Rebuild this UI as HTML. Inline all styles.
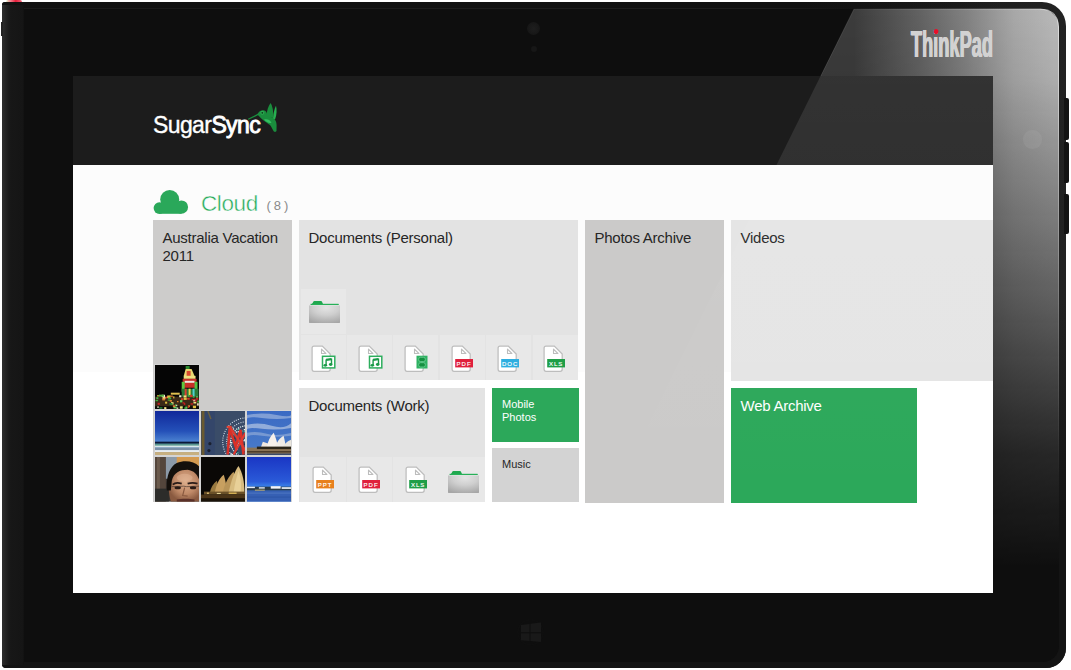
<!DOCTYPE html>
<html><head><meta charset="utf-8">
<style>
*{margin:0;padding:0;box-sizing:border-box}
html,body{width:1071px;height:670px;overflow:hidden;background:#fff}
body{position:relative;font-family:"Liberation Sans",sans-serif}
.a{position:absolute}
.tile{position:absolute;overflow:hidden}
.tt{position:absolute;left:9.5px;top:9.2px;font-size:15px;line-height:17.8px;color:#262626;letter-spacing:-0.25px;white-space:nowrap}
.cell{position:absolute;background:#e8e8e8}
.ph{position:absolute;width:45px;height:45px;overflow:hidden}
</style></head><body>

<div class="a" style="left:2px;top:2px;width:1064px;height:666px;background:linear-gradient(90deg,#161616 0,#1a1a1a 70%,#1e1e1e 90%,#222 100%);border-radius:3px 24px 20px 4px"></div>
<div class="a" style="left:2px;top:2px;width:1000px;height:7px;background:linear-gradient(90deg,#111 0,#111 80%,rgba(17,17,17,0) 100%);border-radius:3px 0 0 0"></div>
<div class="a" style="left:24px;top:7.5px;width:830px;height:1px;background:linear-gradient(90deg,#1a1a1a 0,#1e1e1e 90%,rgba(30,30,30,0) 100%)"></div>
<div class="a" style="left:2px;top:300px;width:1064px;height:368px;background:linear-gradient(180deg,rgba(20,20,20,0) 0,#141414 60%);border-radius:0 0 20px 4px"></div>
<div class="a" style="left:2px;top:5px;width:22px;height:660px;background:linear-gradient(90deg,#2e2e2e 0,#222 4px,#1a1a1a 7px,#171717 9px,#151515 21px,#101010 22px)"></div>
<div class="a" style="left:6px;top:0;width:16px;height:2px;background:linear-gradient(90deg,rgba(200,230,160,0.6) 0,rgba(240,90,110,0.8) 30%,#e8203c 60%,rgba(232,32,60,0.7) 100%);border-radius:3px 3px 0 0"></div>
<div class="a" style="left:1px;top:22px;width:1.5px;height:14px;background:#222"></div>
<div class="a" style="left:1064px;top:98px;width:5px;height:42px;background:#131313;border-radius:0 2px 2px 0"></div>
<div class="a" style="left:1064px;top:142px;width:5px;height:41px;background:#131313;border-radius:0 2px 2px 0"></div>
<div class="a" style="left:1064px;top:194px;width:5px;height:40px;background:#131313;border-radius:0 2px 2px 0"></div>
<div class="a" style="left:24px;top:8.5px;width:1035px;height:653px;background:#0e0e0e;border-radius:1px 18px 16px 1px;overflow:hidden">
<svg class="a" style="left:0;top:0" width="1035" height="655"><defs><linearGradient id="gh" gradientUnits="userSpaceOnUse" x1="829.9925000000001" y1="0" x2="1030" y2="0"><stop offset="0" stop-color="#3c3c3c"/><stop offset="0.33" stop-color="#626262"/><stop offset="0.54" stop-color="#7e7e7e"/><stop offset="0.8" stop-color="#a8a8a8"/><stop offset="1" stop-color="#b8b8b8"/></linearGradient><linearGradient id="gv" gradientUnits="userSpaceOnUse" x1="0" y1="0" x2="0" y2="655"><stop offset="0" stop-color="#fff"/><stop offset="0.1" stop-color="#f0f0f0"/><stop offset="0.22" stop-color="#c4c4c4"/><stop offset="0.45" stop-color="#787878"/><stop offset="0.68" stop-color="#262626"/><stop offset="0.86" stop-color="#000"/></linearGradient><mask id="gm"><rect x="0" y="0" width="1035" height="655" fill="url(#gv)"/></mask></defs><polygon points="834.2,-8.5 1100,-8.5 1100,700 487.70000000000005,691.5" fill="url(#gh)" mask="url(#gm)"/><line x1="829.9925000000001" y1="0" x2="796.58" y2="67.5" stroke="#fff" stroke-opacity="0.12" stroke-width="1"/></svg>
</div>
<div class="a" style="left:527px;top:22px;width:13px;height:13px;border-radius:50%;background:radial-gradient(circle at 50% 50%,#1e1e1e 0,#191919 50%,#121212 100%)"></div>
<div class="a" style="left:531px;top:46px;width:6px;height:6px;border-radius:50%;background:#171717"></div>
<div class="a" style="left:1023px;top:130px;width:19px;height:19px;border-radius:50%;background:radial-gradient(circle,rgba(255,255,255,0.05) 0,rgba(255,255,255,0.06) 70%,rgba(255,255,255,0.09) 85%,rgba(255,255,255,0) 100%)"></div>
<svg class="a" style="left:0;top:0" width="1071" height="670"><defs><linearGradient id="eh" gradientUnits="userSpaceOnUse" x1="1058" y1="0" x2="1058" y2="480"><stop offset="0" stop-color="#fff" stop-opacity="0.55"/><stop offset="0.4" stop-color="#fff" stop-opacity="0.3"/><stop offset="1" stop-color="#fff" stop-opacity="0"/></linearGradient><linearGradient id="eh2" gradientUnits="userSpaceOnUse" x1="854" y1="0" x2="1040" y2="0"><stop offset="0" stop-color="#fff" stop-opacity="0.05"/><stop offset="1" stop-color="#fff" stop-opacity="0.45"/></linearGradient></defs><path d="M854,9 H1040" stroke="url(#eh2)" stroke-width="1" fill="none"/><path d="M1040,9 Q1058.5,9 1058.5,27 V480" stroke="url(#eh)" stroke-width="1" fill="none"/></svg>
<svg class="a" style="left:900px;top:20px" width="100" height="44" viewBox="0 0 100 44"><text x="10.5" y="36.6" font-family="Liberation Sans" font-weight="bold" font-size="36.5" fill="#d2d2d2" transform="translate(10.5,0) scale(0.5,1) translate(-10.5,0)" letter-spacing="0">ThinkPad</text><text x="11.3" y="36.6" font-family="Liberation Sans" font-weight="bold" font-size="36.5" fill="#d2d2d2" transform="translate(10.5,0) scale(0.5,1) translate(-10.5,0)" letter-spacing="0">ThinkPad</text><text x="12.1" y="36.6" font-family="Liberation Sans" font-weight="bold" font-size="36.5" fill="#d2d2d2" transform="translate(10.5,0) scale(0.5,1) translate(-10.5,0)" letter-spacing="0">ThinkPad</text><ellipse cx="36.1" cy="11.6" rx="2.3" ry="2.6" fill="#e8102a"/></svg>
<svg class="a" style="left:510px;top:611px" width="41" height="41" viewBox="0 0 41 41"><circle cx="31" cy="21" r="0" fill="none"/><circle cx="31" cy="32" r="0"/><circle cx="31" cy="21" r="0"/><circle cx="30.8" cy="21.3" r="12.5" fill="none" stroke="#101010" stroke-width="1.2" transform="translate(-10.3,0)"/><g fill="#191919"><path d="M11,14 L19.5,13 V21.2 H11 Z"/><path d="M20.5,12.8 L31,11.6 V21.2 H20.5 Z"/><path d="M11,22.2 H19.5 V30 L11,29.2 Z"/><path d="M20.5,22.2 H31 V31 L20.5,30.1 Z"/></g></svg>
<div class="a" style="left:73px;top:76px;width:920px;height:517px;background:#fcfcfc;overflow:hidden">
<div class="a" style="left:0;top:296px;width:920px;height:221px;background:#fff"></div>
<div class="a" style="left:0;top:0;width:920px;height:89px;background:#1c1c1c"></div>
<div class="a" style="left:80px;top:35px;font-size:23px;line-height:28px;color:#fff;letter-spacing:-0.6px;-webkit-text-stroke:0.35px #fff">Sugar<span style="-webkit-text-stroke:0.9px #fff">Sync</span></div>
<svg class="a" style="left:167px;top:22px" width="45" height="40" viewBox="0 0 45 40"><path d="M8.7,21 L18.5,16.2" stroke="#1a8d3d" stroke-width="1.3" stroke-linecap="round"/><path d="M17.3,16.5 C18.5,13.5 21,12 23.5,12.2 C26,12.5 27,14.5 27.2,17 L33.4,20.3 C35.5,21.5 36.5,24 36.6,27 L36.5,33 C36,33.8 35,34 34,33.7 C32.5,31.5 31.5,29 30,27 C28,25.5 25.5,24 23.9,22.7 C21.5,21 19.5,18.5 17.3,16.5 Z" fill="#1a8d3d"/><path d="M26.5,18.5 C26.8,12 28.5,7.5 30.7,5 C32.5,8 33.5,13 33.3,20 Z" fill="#1a8d3d"/><path d="M33,20.5 C33.5,15 34.5,10.5 36,7.8 C37,11.5 36.8,17 35,21.5 Z" fill="#26b050"/><path d="M24,21.5 C26.5,20.5 30,21.5 31.5,24.5 C30,26 26.5,24.5 24,21.5 Z" fill="#34c060"/><circle cx="22.3" cy="14.8" r="2" fill="#2aa850"/><circle cx="22.3" cy="14.8" r="0.9" fill="#0d3d1a"/></svg>
<svg class="a" style="left:80px;top:113px" width="36" height="26" viewBox="0 0 36 26"><g fill="#2aa85a"><circle cx="16.7" cy="10.5" r="9.5"/><circle cx="28.4" cy="18.1" r="6.7"/><circle cx="6.4" cy="19.1" r="5.8"/><rect x="6.4" y="14" width="22" height="10.8"/></g></svg>
<div class="a" style="left:128px;top:113.5px;font-size:22.5px;line-height:28px;color:#28ad5c;letter-spacing:-0.4px;-webkit-text-stroke:0.45px #fcfcfc">Cloud</div>
<div class="a" style="left:193.5px;top:122px;font-size:13px;line-height:16px;color:#8a8a8a;letter-spacing:-0.3px">( 8 )</div>
<div class="tile" style="left:80px;top:144px;width:139px;height:282px;background:#cdcccb">
<div class="tt">Australia Vacation<br>2011</div>
<div class="a" style="left:0.5px;top:143.5px;width:139px;height:139px;background:#d4d4d4"></div>
<div class="a" style="left:46px;top:143.5px;width:93px;height:46px;background:#cdcccb"></div>
<svg class="a" style="left:1.5px;top:144.5px" width="44.5" height="44.5" viewBox="0 0 45 45" preserveAspectRatio="none"><rect width="45" height="45" fill="#050505"/><rect x="31" y="1" width="4" height="3" fill="#2a8a30"/><polygon points="29,11 31,4 37,4 40,11" fill="#e8d870"/><rect x="32" y="6" width="4" height="5" fill="#d84a30"/><rect x="29" y="11" width="12" height="3" fill="#f0e080"/><rect x="28" y="14" width="14" height="9" fill="#c83028"/><rect x="30" y="16" width="10" height="2" fill="#f0e8e0"/><rect x="27" y="17" width="3" height="10" fill="#60c840"/><rect x="40" y="17" width="3" height="10" fill="#50c040"/><rect x="27" y="24" width="17" height="10" fill="#2a7a38"/><rect x="30" y="24" width="2" height="10" fill="#d84030"/><rect x="34" y="24" width="2" height="10" fill="#e8d850"/><rect x="38" y="24" width="2" height="10" fill="#50d0d0"/><rect x="0" y="32" width="45" height="10" fill="#3a2a18"/><rect x="0" y="42" width="45" height="3" fill="#0a0a0a"/><rect x="10.2" y="37.1" width="2.1" height="2.0" fill="#e0c040"/><rect x="26.0" y="41.8" width="2.3" height="1.9" fill="#208038"/><rect x="42.8" y="36.1" width="3.1" height="1.8" fill="#40b040"/><rect x="10.0" y="32.0" width="3.3" height="1.7" fill="#d03a28"/><rect x="28.9" y="30.8" width="2.9" height="2.0" fill="#f0e080"/><rect x="33.5" y="40.7" width="1.8" height="2.0" fill="#e08030"/><rect x="30.7" y="42.0" width="2.1" height="2.2" fill="#60d060"/><rect x="41.5" y="31.7" width="2.0" height="1.2" fill="#60d060"/><rect x="9.3" y="42.6" width="2.2" height="2.0" fill="#f0e080"/><rect x="18.1" y="40.8" width="2.5" height="1.9" fill="#e08030"/><rect x="25.1" y="41.8" width="2.8" height="2.4" fill="#f0e080"/><rect x="42.6" y="38.7" width="1.6" height="2.3" fill="#f0f0d0"/><rect x="38.9" y="37.4" width="2.8" height="1.5" fill="#f0e080"/><rect x="12.3" y="30.8" width="3.2" height="2.5" fill="#e0c040"/><rect x="14.8" y="30.9" width="3.3" height="1.2" fill="#e08030"/><rect x="33.1" y="41.3" width="1.3" height="2.0" fill="#d03a28"/><rect x="16.2" y="37.6" width="2.5" height="2.4" fill="#f0e080"/><rect x="21.7" y="43.0" width="1.9" height="1.3" fill="#f0f0d0"/><rect x="1.3" y="32.6" width="2.1" height="2.0" fill="#40b040"/><rect x="29.7" y="42.7" width="2.0" height="1.7" fill="#40b040"/><rect x="38.6" y="34.9" width="2.3" height="1.9" fill="#f0f0d0"/><rect x="4.4" y="42.6" width="3.1" height="1.6" fill="#208038"/><rect x="40.3" y="35.7" width="1.8" height="1.6" fill="#c02020"/><rect x="0.5" y="35.4" width="2.5" height="1.2" fill="#40b040"/><rect x="2.6" y="38.2" width="2.3" height="2.1" fill="#c02020"/><rect x="26.2" y="33.6" width="2.3" height="2.0" fill="#d03a28"/><rect x="41.4" y="33.3" width="2.2" height="2.0" fill="#c02020"/><rect x="7.6" y="32.4" width="2.9" height="2.3" fill="#f0e080"/><rect x="12.9" y="34.9" width="3.0" height="1.2" fill="#40b040"/><rect x="13.3" y="32.9" width="3.0" height="1.5" fill="#40b040"/><rect x="29.2" y="38.4" width="1.4" height="2.0" fill="#c02020"/><rect x="29.0" y="32.9" width="3.1" height="2.4" fill="#e0c040"/><rect x="14.5" y="38.5" width="3.2" height="1.8" fill="#208038"/><rect x="33.8" y="30.4" width="3.4" height="1.6" fill="#40b040"/><rect x="37.1" y="34.4" width="3.1" height="1.3" fill="#c02020"/><rect x="25.3" y="35.5" width="2.4" height="2.3" fill="#60d060"/><rect x="14.9" y="35.4" width="2.2" height="1.7" fill="#e08030"/><rect x="6.7" y="30.1" width="3.4" height="2.3" fill="#f0f0d0"/><rect x="18.7" y="42.4" width="3.3" height="1.5" fill="#60d060"/><rect x="36.0" y="38.6" width="2.4" height="1.6" fill="#c02020"/><rect x="38.3" y="41.2" width="3.2" height="2.5" fill="#e0c040"/><rect x="34.8" y="30.6" width="3.3" height="2.1" fill="#208038"/><rect x="38.6" y="41.7" width="2.5" height="1.2" fill="#e0c040"/><rect x="7.4" y="33.9" width="2.7" height="1.9" fill="#e08030"/><rect x="2.3" y="41.9" width="1.5" height="1.4" fill="#f0f0d0"/><rect x="20.5" y="40.2" width="2.0" height="1.5" fill="#f0f0d0"/><rect x="38.2" y="31.5" width="1.8" height="1.6" fill="#40b040"/><rect x="35.4" y="30.1" width="2.6" height="2.3" fill="#d03a28"/><rect x="32.5" y="33.2" width="2.6" height="1.9" fill="#d03a28"/><rect x="20.3" y="40.1" width="1.2" height="1.3" fill="#40b040"/><rect x="2.0" y="30.6" width="2.3" height="1.2" fill="#e0c040"/><rect x="22.2" y="36.4" width="1.6" height="1.3" fill="#e08030"/><rect x="27.8" y="37.6" width="2.0" height="1.4" fill="#c02020"/><rect x="18.4" y="31.7" width="1.2" height="2.1" fill="#e0c040"/><rect x="24.4" y="30.6" width="2.3" height="2.0" fill="#f0f0d0"/><rect x="16" y="28" width="9" height="2" fill="#e0c050"/><rect x="4" y="30" width="5" height="2" fill="#50b040"/></svg>
<svg class="a" style="left:1.5px;top:190.8px" width="44.5" height="44.5" viewBox="0 0 45 45" preserveAspectRatio="none"><defs><linearGradient id="p2" x1="0" y1="0" x2="0" y2="1"><stop offset="0" stop-color="#10289a"/><stop offset="0.45" stop-color="#2450b8"/><stop offset="0.68" stop-color="#4a80d0"/></linearGradient></defs><rect width="45" height="45" fill="url(#p2)"/><rect y="31" width="45" height="2.2" fill="#0a1838"/><rect y="33" width="45" height="3" fill="#5a9890"/><rect y="35" width="45" height="2" fill="#d8e8e8"/><rect y="37" width="45" height="2.5" fill="#7a90a8"/><rect y="39.5" width="45" height="2" fill="#e8ecf0"/><rect y="41.5" width="45" height="3.5" fill="#c8b080"/></svg>
<svg class="a" style="left:47.5px;top:190.8px" width="44.5" height="44.5" viewBox="0 0 45 45" preserveAspectRatio="none"><rect width="45" height="45" fill="#34466a"/><rect x="14" width="31" height="45" fill="#3a4c68"/><rect x="0.5" y="0" width="3" height="45" fill="#6a5a30"/><path d="M7,0 L10,8" stroke="#6a6040" stroke-width="1.5"/><circle cx="46" cy="31" r="24" fill="none" stroke="#d8e4ec" stroke-width="1.1" stroke-dasharray="1 1.3"/><circle cx="46" cy="31" r="20" fill="none" stroke="#d8e4ec" stroke-width="1.1" stroke-dasharray="1 1.3"/><circle cx="46" cy="31" r="16" fill="none" stroke="#e8f0f0" stroke-width="1.2" stroke-dasharray="1.2 1"/><rect x="31.8" y="20.2" width="1.4" height="1.4" fill="#e8f0e8"/><rect x="27.3" y="31.0" width="1.4" height="1.4" fill="#f0f0f0"/><rect x="36.5" y="41.5" width="1.4" height="1.4" fill="#40b0a0"/><rect x="26.7" y="28.1" width="1.4" height="1.4" fill="#e8f0e8"/><rect x="30.3" y="31.4" width="1.4" height="1.4" fill="#e8f0e8"/><rect x="40.9" y="19.5" width="1.4" height="1.4" fill="#40b0a0"/><rect x="37.4" y="32.3" width="1.4" height="1.4" fill="#e8f0e8"/><rect x="36.4" y="27.1" width="1.4" height="1.4" fill="#40b0a0"/><rect x="26.8" y="40.0" width="1.4" height="1.4" fill="#f0f0f0"/><rect x="33.5" y="31.1" width="1.4" height="1.4" fill="#f0f0f0"/><rect x="36.1" y="35.1" width="1.4" height="1.4" fill="#e8f0e8"/><rect x="36.5" y="33.9" width="1.4" height="1.4" fill="#f0f0f0"/><rect x="27.8" y="35.9" width="1.4" height="1.4" fill="#e8f0e8"/><rect x="37.1" y="29.9" width="1.4" height="1.4" fill="#203040"/><rect x="40.0" y="29.0" width="1.4" height="1.4" fill="#203040"/><rect x="32.5" y="23.0" width="1.4" height="1.4" fill="#40b0a0"/><rect x="38.6" y="22.8" width="1.4" height="1.4" fill="#f0f0f0"/><rect x="35.5" y="40.5" width="1.4" height="1.4" fill="#203040"/><rect x="31.2" y="43.4" width="1.4" height="1.4" fill="#e8f0e8"/><rect x="35.2" y="20.6" width="1.4" height="1.4" fill="#f0f0f0"/><rect x="28.7" y="29.7" width="1.4" height="1.4" fill="#e8f0e8"/><rect x="43.3" y="18.2" width="1.4" height="1.4" fill="#f0f0f0"/><rect x="32.1" y="25.8" width="1.4" height="1.4" fill="#203040"/><rect x="36.4" y="28.8" width="1.4" height="1.4" fill="#e8f0e8"/><rect x="43.0" y="29.3" width="1.4" height="1.4" fill="#e8f0e8"/><rect x="27.1" y="35.6" width="1.4" height="1.4" fill="#203040"/><rect x="31.1" y="26.8" width="1.4" height="1.4" fill="#f0f0f0"/><rect x="26.4" y="28.9" width="1.4" height="1.4" fill="#40b0a0"/><rect x="37.0" y="29.8" width="1.4" height="1.4" fill="#40b0a0"/><rect x="39.8" y="19.6" width="1.4" height="1.4" fill="#40b0a0"/><rect x="33.2" y="41.7" width="1.4" height="1.4" fill="#203040"/><rect x="27.5" y="28.6" width="1.4" height="1.4" fill="#f0f0f0"/><rect x="41.9" y="38.9" width="1.4" height="1.4" fill="#f0f0f0"/><rect x="38.7" y="43.6" width="1.4" height="1.4" fill="#203040"/><rect x="43.2" y="20.2" width="1.4" height="1.4" fill="#40b0a0"/><rect x="28.7" y="34.4" width="1.4" height="1.4" fill="#e8f0e8"/><rect x="34.7" y="32.5" width="1.4" height="1.4" fill="#f0f0f0"/><rect x="31.1" y="20.1" width="1.4" height="1.4" fill="#f0f0f0"/><rect x="37.0" y="24.9" width="1.4" height="1.4" fill="#40b0a0"/><rect x="38.4" y="30.4" width="1.4" height="1.4" fill="#e8f0e8"/><rect x="34.2" y="40.4" width="1.4" height="1.4" fill="#203040"/><rect x="33.2" y="27.0" width="1.4" height="1.4" fill="#203040"/><rect x="37.4" y="17.7" width="1.4" height="1.4" fill="#e8f0e8"/><rect x="43.7" y="28.3" width="1.4" height="1.4" fill="#e8f0e8"/><rect x="32.1" y="17.5" width="1.4" height="1.4" fill="#e8f0e8"/><rect x="36.2" y="31.0" width="1.4" height="1.4" fill="#f0f0f0"/><rect x="37.0" y="18.0" width="1.4" height="1.4" fill="#40b0a0"/><rect x="37.1" y="20.2" width="1.4" height="1.4" fill="#f0f0f0"/><rect x="43.2" y="32.9" width="1.4" height="1.4" fill="#203040"/><rect x="28.2" y="39.8" width="1.4" height="1.4" fill="#203040"/><rect x="34.6" y="24.7" width="1.4" height="1.4" fill="#40b0a0"/><rect x="27.8" y="25.6" width="1.4" height="1.4" fill="#f0f0f0"/><rect x="34.6" y="35.4" width="1.4" height="1.4" fill="#e8f0e8"/><rect x="29.7" y="42.7" width="1.4" height="1.4" fill="#f0f0f0"/><rect x="28.6" y="31.2" width="1.4" height="1.4" fill="#e8f0e8"/><rect x="39.6" y="24.3" width="1.4" height="1.4" fill="#e8f0e8"/><rect x="38.5" y="23.3" width="1.4" height="1.4" fill="#f0f0f0"/><rect x="42.3" y="26.0" width="1.4" height="1.4" fill="#40b0a0"/><rect x="35.6" y="37.8" width="1.4" height="1.4" fill="#f0f0f0"/><rect x="37.5" y="33.2" width="1.4" height="1.4" fill="#40b0a0"/><path d="M27,44 L29,17 L35,36 L40,19 L43,44" fill="none" stroke="#d83028" stroke-width="2.6"/><path d="M30,17 L45,40 M45,22 L33,44" fill="none" stroke="#e03a30" stroke-width="2.2"/><rect x="26" y="15" width="5" height="2" fill="#e84030"/><circle cx="9" cy="33" r="1.6" fill="#1a2030"/><circle cx="8" cy="40" r="1.6" fill="#1a2030"/></svg>
<svg class="a" style="left:93.8px;top:190.8px" width="44.5" height="44.5" viewBox="0 0 45 45" preserveAspectRatio="none"><defs><linearGradient id="p4" x1="0" y1="0" x2="0" y2="1"><stop offset="0" stop-color="#3a6ac4"/><stop offset="1" stop-color="#4a7cc8"/></linearGradient></defs><rect width="45" height="45" fill="url(#p4)"/><path d="M0,4 Q15,1 30,4 T45,3 V7 Q30,9 15,7 T0,8 Z" fill="#b8c8e4" opacity="0.55"/><path d="M0,14 Q12,11 25,15 T45,12 V17 Q30,20 15,18 T0,19 Z" fill="#c8d4e8" opacity="0.6"/><path d="M0,22 Q10,20 20,23 T45,22 V25 Q30,27 15,25 T0,27 Z" fill="#b8c8e0" opacity="0.45"/><path d="M14,37 L16,31 L22,33 L24,37 Z" fill="#f0e8e0"/><path d="M20,37 C21,31 23,26 27,22 C29,27 31,32 31,37 Z" fill="#f6f0ea"/><path d="M28,37 C30,32 33,27 37,25 C38,29 39,33 39,37 Z" fill="#f0ece6"/><path d="M36,37 C38,33 41,30 45,29 V37 Z" fill="#eae6de"/><rect x="0" y="37" width="45" height="8" fill="#8a7456"/><rect x="10" y="36" width="35" height="2.5" fill="#2a2418"/><rect x="0" y="40.5" width="45" height="1.5" fill="#4a3a28"/><rect x="0" y="43" width="45" height="2" fill="#3a4a68"/></svg>
<svg class="a" style="left:1.5px;top:237px" width="44.5" height="44.5" viewBox="0 0 45 45" preserveAspectRatio="none"><defs><radialGradient id="p5" cx="0.55" cy="0.4" r="0.6"><stop offset="0" stop-color="#dcae8c"/><stop offset="0.6" stop-color="#c08a68"/><stop offset="1" stop-color="#8a5a40"/></radialGradient></defs><rect width="45" height="45" fill="#3a3430"/><rect x="0" width="11" height="45" fill="#54463c"/><rect x="2" width="3" height="45" fill="#6a5a4c"/><rect x="11" y="0" width="12" height="22" fill="#8c9aa8"/><rect x="22" y="0" width="23" height="10" fill="#d49a50"/><rect x="0" y="32" width="14" height="13" fill="#2c2c2a"/><path d="M16,45 C14,38 13,30 15,22 C17,15 24,12 31,12 C38,12 44,16 45,22 L45,45 Z" fill="url(#p5)"/><path d="M12,34 C11,22 14,10 22,6 C30,3 40,4 45,10 L45,24 C43,18 40,14 33,13 C25,13 19,16 17,24 L16,34 Z" fill="#14100c"/><path d="M18,28 C20,26 24,26 27,27 M33,27 C36,26 40,26 43,27" stroke="#2a1c18" stroke-width="1.8" fill="none"/><ellipse cx="23" cy="31" rx="3.2" ry="1.6" fill="#2a1a14"/><ellipse cx="38.5" cy="31" rx="3.2" ry="1.6" fill="#2a1a14"/><path d="M17,30 L29,29.5 L32,30 L45,29.5" stroke="#4a3830" stroke-width="0.7" fill="none"/><path d="M30,31 L28,39 L33,39.5" stroke="#8a5a40" stroke-width="1.2" fill="none"/><path d="M22,43 C27,42 35,42 40,43 L40,45 L22,45 Z" fill="#5a3028"/><ellipse cx="30" cy="21" rx="8" ry="4" fill="#e4b898" opacity="0.45"/></svg>
<svg class="a" style="left:47.5px;top:237px" width="44.5" height="44.5" viewBox="0 0 45 45" preserveAspectRatio="none"><rect width="45" height="45" fill="#0a0806"/><path d="M9,36 C10,31 12,27 16,24 C17,28 18,32 18,36 Z" fill="#9a7a40"/><path d="M14,36 C15,29 18,22 23,18 C25,24 26,30 26,36 Z" fill="#c8a060"/><path d="M22,36 C24,27 28,19 33,15 C35,22 36,29 35,36 Z" fill="#b89458"/><path d="M28,36 C30,25 34,14 38,9 C42,16 44,25 44,36 Z" fill="#d8bc80"/><path d="M33,36 C34,28 36,20 38,14 C40,20 41,28 40,36 Z" fill="#e8d098"/><rect x="3" y="35" width="42" height="3" fill="#6a5028"/><rect x="6" y="36" width="2" height="1.2" fill="#f0d080"/><rect x="16" y="36.3" width="4" height="1" fill="#f0e0a0"/><rect x="28" y="36" width="8" height="1.2" fill="#f0c860"/><rect x="0" y="38" width="45" height="4" fill="#4a3418"/><rect x="0" y="42" width="45" height="3" fill="#1a1208"/></svg>
<svg class="a" style="left:93.8px;top:237px" width="44.5" height="44.5" viewBox="0 0 45 45" preserveAspectRatio="none"><defs><linearGradient id="p7" x1="0" y1="0" x2="0" y2="1"><stop offset="0" stop-color="#1a36c4"/><stop offset="0.55" stop-color="#2a5ad8"/><stop offset="0.66" stop-color="#3a80e8"/></linearGradient></defs><rect width="45" height="45" fill="url(#p7)"/><rect y="30" width="45" height="4" fill="#2a3a48"/><rect x="0" y="30" width="8" height="1.5" fill="#e8eef8"/><rect x="12" y="30.5" width="6" height="1.5" fill="#d8e0e8"/><rect x="24" y="29.5" width="10" height="2.5" fill="#f4f6fa"/><rect x="35" y="30.5" width="10" height="1.8" fill="#e0e8f0"/><rect x="8" y="33" width="10" height="1.5" fill="#c8b060"/><rect y="34" width="45" height="11" fill="#3660b4"/><rect y="36" width="45" height="1" fill="#5a80c8" opacity="0.7"/><rect y="40" width="45" height="1" fill="#2a50a0" opacity="0.7"/></svg>
</div>
<div class="tile" style="left:226px;top:144px;width:279px;height:160px;background:#e3e3e3">
<div class="tt">Documents (Personal)</div>
<div class="cell" style="left:1.5px;top:68.5px;width:45px;height:45.3px"></div>
<div class="cell" style="left:1.5px;top:115.3px;width:45px;height:44.5px"></div>
<div class="cell" style="left:47.9px;top:115.3px;width:45px;height:44.5px"></div>
<div class="cell" style="left:94.3px;top:115.3px;width:45px;height:44.5px"></div>
<div class="cell" style="left:140.7px;top:115.3px;width:45px;height:44.5px"></div>
<div class="cell" style="left:187.1px;top:115.3px;width:45px;height:44.5px"></div>
<div class="cell" style="left:233.5px;top:115.3px;width:45px;height:44.5px"></div>
<svg class="a" style="left:8.5px;top:80px" width="34" height="26" viewBox="0 0 34 26"><defs><radialGradient id="fg1" cx="0.55" cy="0.15" r="0.9"><stop offset="0" stop-color="#e4e4e4"/><stop offset="0.45" stop-color="#cfcfcf"/><stop offset="1" stop-color="#a6a6a6"/></radialGradient></defs><path d="M2.6,5 C3.6,4.6 4.6,3.2 5.4,1.6 Q5.7,1 6.4,1 H13 Q13.6,1 13.9,1.6 L15,4 H29.6 Q30.6,4 30.6,5 Z" fill="#1fa84e"/><rect x="2.6" y="3.8" width="28" height="1.5" fill="#27b058"/><path d="M1,5.2 H32 V22.6 Q32,23 31.5,23 H1.5 Q1,23 1,22.6 Z" fill="url(#fg1)"/><rect x="1.5" y="5.2" width="30" height="0.6" fill="#f0f0f0" opacity="0.7"/></svg>
<svg class="a" style="left:12.3px;top:125.0px" width="27" height="28" viewBox="-0.5 -0.5 27 28"><path d="M2.5,0.6 H10.8 L18.7,8.5 V23.8 Q18.7,25.8 16.7,25.8 H2.5 Q0.6,25.8 0.6,23.8 V2.5 Q0.6,0.6 2.5,0.6 Z" fill="#fff" stroke="#bdbdbd" stroke-width="1.25"/><path d="M10,3.6 L10,8 L14.4,8 Z" fill="#fff" stroke="#bdbdbd" stroke-width="1.1" stroke-linejoin="round"/><rect x="11" y="10.8" width="12.3" height="11.6" fill="#fff" stroke="#2eae5e" stroke-width="1.5"/><path d="M14.6,19.6 V14.6 L20,13.8 V18.8" fill="none" stroke="#1a9a48" stroke-width="1.4"/><path d="M14.6,14.3 L20,13.5" stroke="#1a9a48" stroke-width="2"/><ellipse cx="13.8" cy="19.8" rx="1.8" ry="1.4" fill="#1a9a48"/><ellipse cx="19.2" cy="19" rx="1.8" ry="1.4" fill="#1a9a48"/></svg>
<svg class="a" style="left:58.7px;top:125.0px" width="27" height="28" viewBox="-0.5 -0.5 27 28"><path d="M2.5,0.6 H10.8 L18.7,8.5 V23.8 Q18.7,25.8 16.7,25.8 H2.5 Q0.6,25.8 0.6,23.8 V2.5 Q0.6,0.6 2.5,0.6 Z" fill="#fff" stroke="#bdbdbd" stroke-width="1.25"/><path d="M10,3.6 L10,8 L14.4,8 Z" fill="#fff" stroke="#bdbdbd" stroke-width="1.1" stroke-linejoin="round"/><rect x="11" y="10.8" width="12.3" height="11.6" fill="#fff" stroke="#2eae5e" stroke-width="1.5"/><path d="M14.6,19.6 V14.6 L20,13.8 V18.8" fill="none" stroke="#1a9a48" stroke-width="1.4"/><path d="M14.6,14.3 L20,13.5" stroke="#1a9a48" stroke-width="2"/><ellipse cx="13.8" cy="19.8" rx="1.8" ry="1.4" fill="#1a9a48"/><ellipse cx="19.2" cy="19" rx="1.8" ry="1.4" fill="#1a9a48"/></svg>
<svg class="a" style="left:105.1px;top:125.0px" width="27" height="28" viewBox="-0.5 -0.5 27 28"><path d="M2.5,0.6 H10.8 L18.7,8.5 V23.8 Q18.7,25.8 16.7,25.8 H2.5 Q0.6,25.8 0.6,23.8 V2.5 Q0.6,0.6 2.5,0.6 Z" fill="#fff" stroke="#bdbdbd" stroke-width="1.25"/><path d="M10,3.6 L10,8 L14.4,8 Z" fill="#fff" stroke="#bdbdbd" stroke-width="1.1" stroke-linejoin="round"/><rect x="12" y="10.2" width="11" height="12.8" fill="#2eb262"/><rect x="14.2" y="11.8" width="6.6" height="4.3" rx="1.8" fill="#149040" stroke="#7ad4a0" stroke-width="0.7"/><rect x="14.2" y="17.2" width="6.6" height="4.3" rx="1.8" fill="#149040" stroke="#7ad4a0" stroke-width="0.7"/></svg>
<svg class="a" style="left:151.5px;top:125.0px" width="27" height="28" viewBox="-0.5 -0.5 27 28"><path d="M2.5,0.6 H10.8 L18.7,8.5 V23.8 Q18.7,25.8 16.7,25.8 H2.5 Q0.6,25.8 0.6,23.8 V2.5 Q0.6,0.6 2.5,0.6 Z" fill="#fff" stroke="#bdbdbd" stroke-width="1.25"/><path d="M10,3.6 L10,8 L14.4,8 Z" fill="#fff" stroke="#bdbdbd" stroke-width="1.1" stroke-linejoin="round"/><rect x="3.7" y="13.5" width="17.8" height="8.4" fill="#e0203c"/><text x="12.6" y="20" font-family="Liberation Sans" font-size="6" fill="#fff" text-anchor="middle" letter-spacing="1" stroke="#fff" stroke-width="0.15">PDF</text></svg>
<svg class="a" style="left:197.9px;top:125.0px" width="27" height="28" viewBox="-0.5 -0.5 27 28"><path d="M2.5,0.6 H10.8 L18.7,8.5 V23.8 Q18.7,25.8 16.7,25.8 H2.5 Q0.6,25.8 0.6,23.8 V2.5 Q0.6,0.6 2.5,0.6 Z" fill="#fff" stroke="#bdbdbd" stroke-width="1.25"/><path d="M10,3.6 L10,8 L14.4,8 Z" fill="#fff" stroke="#bdbdbd" stroke-width="1.1" stroke-linejoin="round"/><rect x="3.7" y="13.5" width="17.8" height="8.4" fill="#2eaee0"/><text x="12.6" y="20" font-family="Liberation Sans" font-size="6" fill="#fff" text-anchor="middle" letter-spacing="1" stroke="#fff" stroke-width="0.15">DOC</text></svg>
<svg class="a" style="left:244.3px;top:125.0px" width="27" height="28" viewBox="-0.5 -0.5 27 28"><path d="M2.5,0.6 H10.8 L18.7,8.5 V23.8 Q18.7,25.8 16.7,25.8 H2.5 Q0.6,25.8 0.6,23.8 V2.5 Q0.6,0.6 2.5,0.6 Z" fill="#fff" stroke="#bdbdbd" stroke-width="1.25"/><path d="M10,3.6 L10,8 L14.4,8 Z" fill="#fff" stroke="#bdbdbd" stroke-width="1.1" stroke-linejoin="round"/><rect x="3.7" y="13.5" width="17.8" height="8.4" fill="#1f9e48"/><text x="12.6" y="20" font-family="Liberation Sans" font-size="6" fill="#fff" text-anchor="middle" letter-spacing="1" stroke="#fff" stroke-width="0.15">XLS</text></svg>
</div>
<div class="tile" style="left:226px;top:312px;width:186px;height:114px;background:#e3e3e3">
<div class="tt">Documents (Work)</div>
<div class="cell" style="left:1px;top:69px;width:45.5px;height:45px"></div>
<div class="cell" style="left:47.5px;top:69px;width:45.5px;height:45px"></div>
<div class="cell" style="left:94px;top:69px;width:45.5px;height:45px"></div>
<div class="cell" style="left:140px;top:69px;width:45.5px;height:45px"></div>
<svg class="a" style="left:12.5px;top:77.5px" width="27" height="28" viewBox="-0.5 -0.5 27 28"><path d="M2.5,0.6 H10.8 L18.7,8.5 V23.8 Q18.7,25.8 16.7,25.8 H2.5 Q0.6,25.8 0.6,23.8 V2.5 Q0.6,0.6 2.5,0.6 Z" fill="#fff" stroke="#bdbdbd" stroke-width="1.25"/><path d="M10,3.6 L10,8 L14.4,8 Z" fill="#fff" stroke="#bdbdbd" stroke-width="1.1" stroke-linejoin="round"/><rect x="3.7" y="13.5" width="17.8" height="8.4" fill="#e8801c"/><text x="12.6" y="20" font-family="Liberation Sans" font-size="6" fill="#fff" text-anchor="middle" letter-spacing="1" stroke="#fff" stroke-width="0.15">PPT</text></svg>
<svg class="a" style="left:59.0px;top:77.5px" width="27" height="28" viewBox="-0.5 -0.5 27 28"><path d="M2.5,0.6 H10.8 L18.7,8.5 V23.8 Q18.7,25.8 16.7,25.8 H2.5 Q0.6,25.8 0.6,23.8 V2.5 Q0.6,0.6 2.5,0.6 Z" fill="#fff" stroke="#bdbdbd" stroke-width="1.25"/><path d="M10,3.6 L10,8 L14.4,8 Z" fill="#fff" stroke="#bdbdbd" stroke-width="1.1" stroke-linejoin="round"/><rect x="3.7" y="13.5" width="17.8" height="8.4" fill="#e0203c"/><text x="12.6" y="20" font-family="Liberation Sans" font-size="6" fill="#fff" text-anchor="middle" letter-spacing="1" stroke="#fff" stroke-width="0.15">PDF</text></svg>
<svg class="a" style="left:105.5px;top:77.5px" width="27" height="28" viewBox="-0.5 -0.5 27 28"><path d="M2.5,0.6 H10.8 L18.7,8.5 V23.8 Q18.7,25.8 16.7,25.8 H2.5 Q0.6,25.8 0.6,23.8 V2.5 Q0.6,0.6 2.5,0.6 Z" fill="#fff" stroke="#bdbdbd" stroke-width="1.25"/><path d="M10,3.6 L10,8 L14.4,8 Z" fill="#fff" stroke="#bdbdbd" stroke-width="1.1" stroke-linejoin="round"/><rect x="3.7" y="13.5" width="17.8" height="8.4" fill="#1f9e48"/><text x="12.6" y="20" font-family="Liberation Sans" font-size="6" fill="#fff" text-anchor="middle" letter-spacing="1" stroke="#fff" stroke-width="0.15">XLS</text></svg>
<svg class="a" style="left:147.5px;top:81.5px" width="34" height="26" viewBox="0 0 34 26"><defs><radialGradient id="fg2" cx="0.55" cy="0.15" r="0.9"><stop offset="0" stop-color="#e4e4e4"/><stop offset="0.45" stop-color="#cfcfcf"/><stop offset="1" stop-color="#a6a6a6"/></radialGradient></defs><path d="M2.6,5 C3.6,4.6 4.6,3.2 5.4,1.6 Q5.7,1 6.4,1 H13 Q13.6,1 13.9,1.6 L15,4 H29.6 Q30.6,4 30.6,5 Z" fill="#1fa84e"/><rect x="2.6" y="3.8" width="28" height="1.5" fill="#27b058"/><path d="M1,5.2 H32 V22.6 Q32,23 31.5,23 H1.5 Q1,23 1,22.6 Z" fill="url(#fg2)"/><rect x="1.5" y="5.2" width="30" height="0.6" fill="#f0f0f0" opacity="0.7"/></svg>
</div>
<div class="tile" style="left:419px;top:312px;width:86.5px;height:54px;background:#2ca85a">
<div class="tt" style="font-size:11px;line-height:13px;color:#fff;letter-spacing:0;left:10px;top:10px">Mobile<br>Photos</div></div>
<div class="tile" style="left:419px;top:372px;width:86.5px;height:54px;background:#d3d3d3">
<div class="tt" style="font-size:11px;line-height:13px;letter-spacing:0;left:10px;top:10px">Music</div></div>
<div class="tile" style="left:512px;top:144px;width:139px;height:282.5px;background:#cbcac9">
<div class="tt">Photos Archive</div></div>
<div class="tile" style="left:658px;top:144px;width:262px;height:160.5px;background:#e5e5e5">
<div class="tt">Videos</div></div>
<div class="tile" style="left:658px;top:312px;width:186px;height:114.5px;background:#2ca85a">
<div class="tt" style="color:#fff">Web Archive</div></div>
<svg class="a" style="left:0;top:0" width="920" height="517"><defs><linearGradient id="sg" x1="0" y1="0" x2="0" y2="517" gradientUnits="userSpaceOnUse"><stop offset="0" stop-color="#fff" stop-opacity="0.1"/><stop offset="0.17" stop-color="#fff" stop-opacity="0.09"/><stop offset="0.35" stop-color="#fff" stop-opacity="0.035"/><stop offset="0.8" stop-color="#fff" stop-opacity="0"/></linearGradient></defs><polygon points="747.58,0 1000,0 1000,600 450.58000000000004,600" fill="url(#sg)"/></svg>
</div>
</body></html>
